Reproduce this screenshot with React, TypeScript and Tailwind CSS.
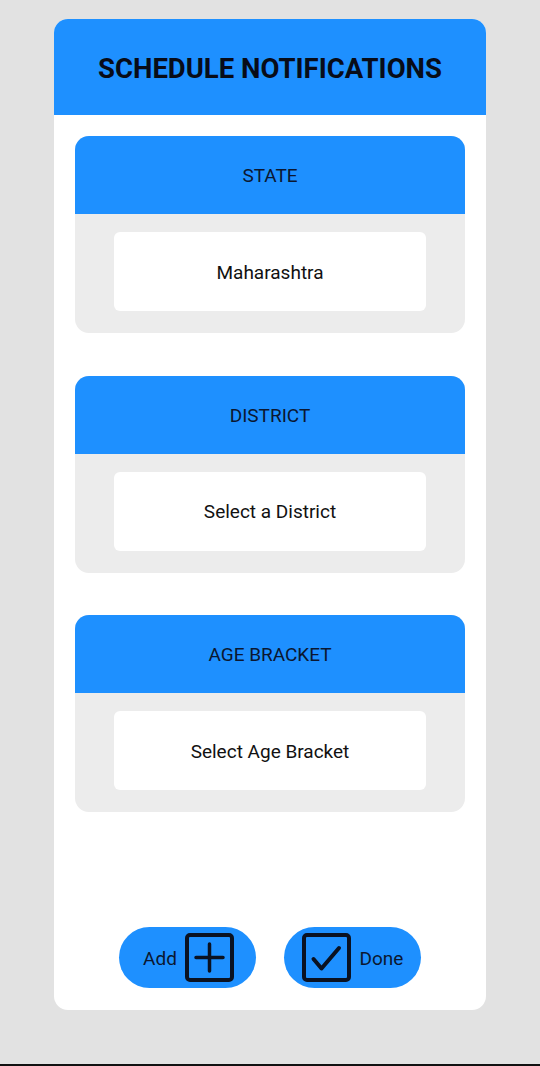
import React from 'react'

const sections = [
  { title: 'STATE', value: 'Maharashtra' },
  { title: 'DISTRICT', value: 'Select a District' },
  { title: 'AGE BRACKET', value: 'Select Age Bracket' },
]

function Section({ title, value }: { title: string; value: string }) {
  return (
    <div className="flex h-[197px] flex-col overflow-hidden rounded-[14px] bg-[#ececec]">
      <div className="flex h-[78px] items-center justify-center bg-[#1e90ff] pt-[3px] text-[19px] text-[#0b1730]">
        {title}
      </div>
      <div className="px-[39px] pt-[18px]">
        <div className="flex h-[79px] items-center justify-center rounded-[6px] bg-white pt-[3px] text-[19px] text-[#111]">
          {value}
        </div>
      </div>
    </div>
  )
}

function PlusBox() {
  return (
    <svg width="49" height="49" viewBox="0 0 49 49" fill="none">
      <rect x="2" y="2" width="45" height="45" rx="3" stroke="#0a1222" strokeWidth="4" />
      <path d="M24.5 11v27M11 24.5h27" stroke="#0a1222" strokeWidth="3.5" strokeLinecap="round" />
    </svg>
  )
}

function CheckBox() {
  return (
    <svg width="49" height="49" viewBox="0 0 49 49" fill="none">
      <rect x="2" y="2" width="45" height="45" rx="3" stroke="#0a1222" strokeWidth="4" />
      <path d="M11.5 26l8 9.5L37 15" stroke="#0a1222" strokeWidth="4" strokeLinecap="round" strokeLinejoin="round" />
    </svg>
  )
}

export default function App() {
  return (
    <div
      className="flex h-[1066px] w-[540px] flex-col bg-[#e2e2e2]"
      style={{ fontFamily: 'Roboto, "Liberation Sans", sans-serif' }}
    >
      <div className="mx-[54px] mt-[19px] flex h-[991px] flex-col overflow-hidden rounded-[14px] bg-white">
        <div className="flex h-[96px] shrink-0 items-center justify-center bg-[#1e90ff] pt-[3px] text-[27.5px] font-bold text-[#080c18]">
          SCHEDULE NOTIFICATIONS
        </div>

        <div className="flex flex-col gap-[42.5px] px-[21px] pt-[21px]">
          {sections.map((s) => (
            <Section key={s.title} title={s.title} value={s.value} />
          ))}
        </div>

        <div className="mt-auto mb-[22px] flex justify-center gap-[28px]">
          <button className="flex h-[61px] w-[137px] items-center justify-center gap-[8px] rounded-full bg-[#1e90ff] pl-[2px] text-[19px] text-[#0b1730]">
            <span className="pt-[3px]">Add</span>
            <PlusBox />
          </button>
          <button className="flex h-[61px] w-[137px] items-center justify-center gap-[9px] rounded-full bg-[#1e90ff] text-[19px] text-[#0b1730]">
            <CheckBox />
            <span className="pt-[3px]">Done</span>
          </button>
        </div>
      </div>

      <div className="mt-auto h-[2px] bg-[#111]" />
    </div>
  )
}
